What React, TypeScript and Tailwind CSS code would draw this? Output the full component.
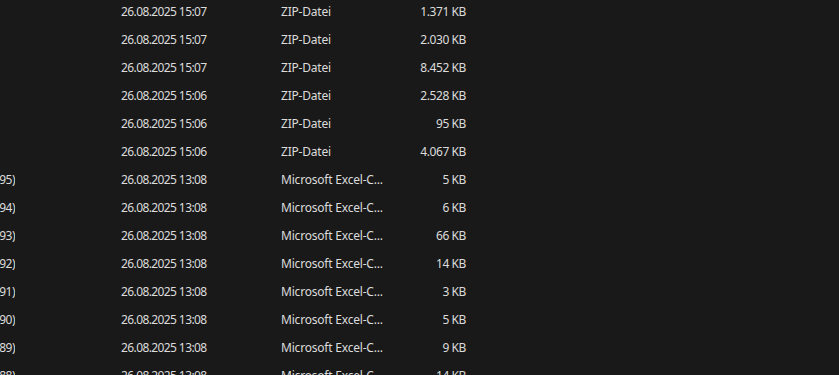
import React from "react";

type Row = { name: string; date: string; type: string; size: string };

const rows: Row[] = [
  { name: "", date: "26.08.2025 15:07", type: "ZIP-Datei", size: "1.371 KB" },
  { name: "", date: "26.08.2025 15:07", type: "ZIP-Datei", size: "2.030 KB" },
  { name: "", date: "26.08.2025 15:07", type: "ZIP-Datei", size: "8.452 KB" },
  { name: "", date: "26.08.2025 15:06", type: "ZIP-Datei", size: "2.528 KB" },
  { name: "", date: "26.08.2025 15:06", type: "ZIP-Datei", size: "95 KB" },
  { name: "", date: "26.08.2025 15:06", type: "ZIP-Datei", size: "4.067 KB" },
  { name: "Export (95)", date: "26.08.2025 13:08", type: "Microsoft Excel-C...", size: "5 KB" },
  { name: "Export (94)", date: "26.08.2025 13:08", type: "Microsoft Excel-C...", size: "6 KB" },
  { name: "Export (93)", date: "26.08.2025 13:08", type: "Microsoft Excel-C...", size: "66 KB" },
  { name: "Export (92)", date: "26.08.2025 13:08", type: "Microsoft Excel-C...", size: "14 KB" },
  { name: "Export (91)", date: "26.08.2025 13:08", type: "Microsoft Excel-C...", size: "3 KB" },
  { name: "Export (90)", date: "26.08.2025 13:08", type: "Microsoft Excel-C...", size: "5 KB" },
  { name: "Export (89)", date: "26.08.2025 13:08", type: "Microsoft Excel-C...", size: "9 KB" },
  { name: "Export (88)", date: "26.08.2025 13:08", type: "Microsoft Excel-C...", size: "14 KB" },
];

export default function App() {
  return (
    <div
      className="w-[839px] h-[375px] overflow-hidden bg-[#191919] text-[#dcdcdc] text-[12px]"
      style={{ fontFamily: '"Noto Sans", "Open Sans", sans-serif' }}
    >
      <div className="-mt-[2px] flex flex-col">
        {rows.map((r, i) => (
          <div key={i} className="flex items-center h-[28px] whitespace-nowrap">
            {/* name column, scrolled mostly out of view */}
            <div className="w-[15px] flex justify-end overflow-hidden tracking-[-0.5px]">
              <span className="shrink-0">{r.name}</span>
            </div>
            <div className="w-[106px]" />
            <div className="w-[160px] tracking-[-0.6px]">{r.date}</div>
            <div className="w-[105px] tracking-[-0.2px]">{r.type}</div>
            <div className="w-[80px] text-right tracking-[-0.4px]">{r.size}</div>
          </div>
        ))}
      </div>
    </div>
  );
}
